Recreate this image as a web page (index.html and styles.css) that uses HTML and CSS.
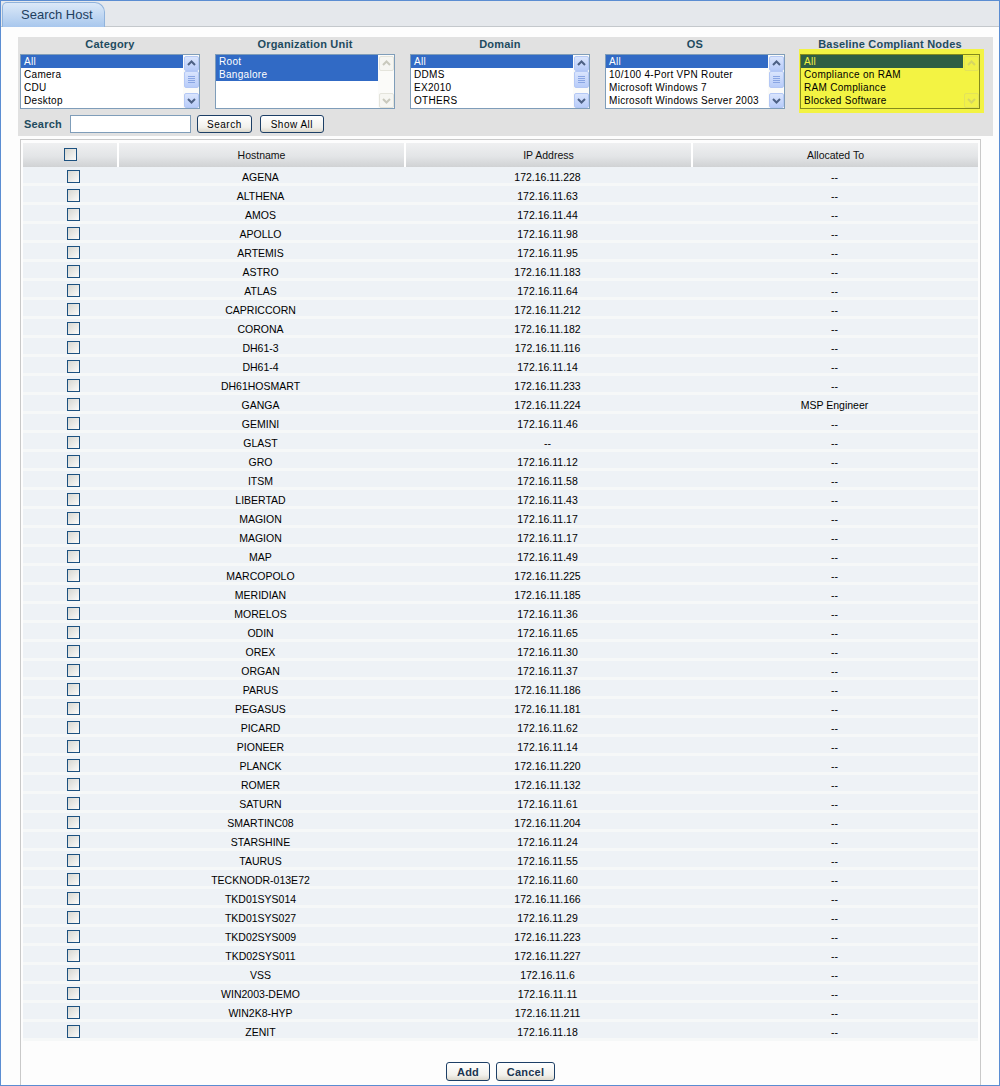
FILE: index.html
```html
<!DOCTYPE html>
<html lang="en">
<head>
    <meta charset="UTF-8">
    <title>Search Host</title>
    <link rel="stylesheet" href="styles.css">
</head>
<body>
<div class="window">
    <div class="tabbar">
        <div class="tab">Search Host</div>
    </div>
    <div class="content">
        <div class="filters">
            <div class="filter-row">
                <div class="filter">
                    <div class="filter-label">Category</div>
                    <div class="listbox">
                        <ul class="options">
                            <li class="sel">All</li>
                            <li>Camera</li>
                            <li>CDU</li>
                            <li>Desktop</li>
                        </ul>
                        <div class="scroll">
                            <span class="sb-btn"><svg width="13" height="13"><polyline points="3,8 6.5,4.5 10,8"/></svg></span>
                            <span class="sb-thumb"><i></i><i></i><i></i><i></i></span>
                            <span class="sb-btn last"><svg width="13" height="13"><polyline points="3,5 6.5,8.5 10,5"/></svg></span>
                        </div>
                    </div>
                </div>
                <div class="filter">
                    <div class="filter-label">Organization Unit</div>
                    <div class="listbox">
                        <ul class="options">
                            <li class="sel">Root</li>
                            <li class="sel">Bangalore</li>
                        </ul>
                        <div class="scroll off">
                            <span class="sb-btn"><svg width="13" height="13"><polyline points="3,8 6.5,4.5 10,8"/></svg></span>
                            <span class="sb-btn last"><svg width="13" height="13"><polyline points="3,5 6.5,8.5 10,5"/></svg></span>
                        </div>
                    </div>
                </div>
                <div class="filter">
                    <div class="filter-label">Domain</div>
                    <div class="listbox">
                        <ul class="options">
                            <li class="sel">All</li>
                            <li>DDMS</li>
                            <li>EX2010</li>
                            <li>OTHERS</li>
                        </ul>
                        <div class="scroll">
                            <span class="sb-btn"><svg width="13" height="13"><polyline points="3,8 6.5,4.5 10,8"/></svg></span>
                            <span class="sb-thumb"><i></i><i></i><i></i><i></i></span>
                            <span class="sb-btn last"><svg width="13" height="13"><polyline points="3,5 6.5,8.5 10,5"/></svg></span>
                        </div>
                    </div>
                </div>
                <div class="filter">
                    <div class="filter-label">OS</div>
                    <div class="listbox">
                        <ul class="options">
                            <li class="sel">All</li>
                            <li>10/100 4-Port VPN Router</li>
                            <li>Microsoft Windows 7</li>
                            <li>Microsoft Windows Server 2003</li>
                        </ul>
                        <div class="scroll">
                            <span class="sb-btn"><svg width="13" height="13"><polyline points="3,8 6.5,4.5 10,8"/></svg></span>
                            <span class="sb-thumb"><i></i><i></i><i></i><i></i></span>
                            <span class="sb-btn last"><svg width="13" height="13"><polyline points="3,5 6.5,8.5 10,5"/></svg></span>
                        </div>
                    </div>
                </div>
                <div class="filter">
                    <div class="filter-label">Baseline Compliant Nodes</div>
                    <div class="highlight">
                        <div class="listbox yellow">
                            <ul class="options">
                                <li class="sel">All</li>
                                <li>Compliance on RAM</li>
                                <li>RAM Compliance</li>
                                <li>Blocked Software</li>
                            </ul>
                            <div class="scroll off">
                                <span class="sb-btn"><svg width="13" height="13"><polyline points="3,8 6.5,4.5 10,8"/></svg></span>
                                <span class="sb-btn last"><svg width="13" height="13"><polyline points="3,5 6.5,8.5 10,5"/></svg></span>
                            </div>
                        </div>
                    </div>
                </div>
            </div>
            <div class="search-row">
                <span class="search-label">Search</span>
                <input type="text" class="search-input">
                <button class="btn btn-search">Search</button>
                <button class="btn btn-showall">Show All</button>
            </div>
        </div>

        <div class="grid-panel">
            <table class="grid">
                <thead>
                    <tr>
                        <th class="col-check"><span class="check"></span></th>
                        <th class="col-host">Hostname</th>
                        <th class="col-ip">IP Address</th>
                        <th>Allocated To</th>
                    </tr>
                </thead>
                <tbody id="hostRows"></tbody>
            </table>
            <div class="actions">
                <button class="btn big btn-add">Add</button>
                <button class="btn big btn-cancel">Cancel</button>
            </div>
        </div>
    </div>
</div>

<script>
    // hostname, last octet ('' = no ip), allocated to
    const hosts = [
        ['AGENA', '228'], ['ALTHENA', '63'], ['AMOS', '44'], ['APOLLO', '98'],
        ['ARTEMIS', '95'], ['ASTRO', '183'], ['ATLAS', '64'], ['CAPRICCORN', '212'],
        ['CORONA', '182'], ['DH61-3', '116'], ['DH61-4', '14'], ['DH61HOSMART', '233'],
        ['GANGA', '224', 'MSP Engineer'], ['GEMINI', '46'], ['GLAST', ''], ['GRO', '12'],
        ['ITSM', '58'], ['LIBERTAD', '43'], ['MAGION', '17'], ['MAGION', '17'],
        ['MAP', '49'], ['MARCOPOLO', '225'], ['MERIDIAN', '185'], ['MORELOS', '36'],
        ['ODIN', '65'], ['OREX', '30'], ['ORGAN', '37'], ['PARUS', '186'],
        ['PEGASUS', '181'], ['PICARD', '62'], ['PIONEER', '14'], ['PLANCK', '220'],
        ['ROMER', '132'], ['SATURN', '61'], ['SMARTINC08', '204'], ['STARSHINE', '24'],
        ['TAURUS', '55'], ['TECKNODR-013E72', '60'], ['TKD01SYS014', '166'], ['TKD01SYS027', '29'],
        ['TKD02SYS009', '223'], ['TKD02SYS011', '227'], ['VSS', '6'], ['WIN2003-DEMO', '11'],
        ['WIN2K8-HYP', '211'], ['ZENIT', '18']
    ];

    const tbody = document.getElementById('hostRows');
    hosts.forEach(([name, octet, owner]) => {
        const tr = document.createElement('tr');
        const ip = octet ? '172.16.11.' + octet : '--';
        tr.innerHTML = `
            <td class="cell-check"><span class="check"></span></td>
            <td>${name}</td>
            <td>${ip}</td>
            <td>${owner || '--'}</td>
        `;
        tbody.appendChild(tr);
    });
</script>
</body>
</html>
```

FILE: styles.css
```css
html, body {
    margin: 0;
    padding: 0;
}

body {
    font-family: "Liberation Sans", Arial, sans-serif;
    font-size: 11px;
    color: #000;
    background: #fff;
}

.window {
    width: 1000px;
    height: 1086px;
    box-sizing: border-box;
    border: 1px solid #5b8dd2;
    background: #fdfdfd;
    display: flex;
    flex-direction: column;
}

/* tab strip */
.tabbar {
    height: 25px;
    background: #e5e8ec;
    border-bottom: 1px solid #c4c8cc;
    display: flex;
}

.tab {
    margin: 1px 0 -1px 1px;
    width: 103px;
    height: 25px;
    box-sizing: border-box;
    border: 1px solid #90b3dc;
    border-bottom: none;
    border-radius: 5px 10px 0 0;
    background: linear-gradient(#dce9f8, #a8c7ed);
    padding-left: 18px;
    line-height: 24px;
    font-size: 13px;
    color: #1e3f5f;
}

.content {
    flex: 1;
    display: flex;
    flex-direction: column;
    padding: 10px 0 0 17px;
}

/* filter panel */
.filters {
    width: 975px;
    height: 99px;
    box-sizing: border-box;
    background: #e1e1e1;
    padding: 0 2px;
}

.filter-row {
    display: flex;
    gap: 15px;
}

.filter {
    width: 180px;
}

.filter-label {
    text-align: center;
    font-weight: bold;
    line-height: 14px;
    height: 14px;
    margin-bottom: 3px;
    color: #1e4b5f;
    letter-spacing: 0.2px;
}

.listbox {
    display: flex;
    height: 55px;
    box-sizing: border-box;
    border: 1px solid #7f9db9;
    background: #fff;
}

.options {
    flex: 1;
    list-style: none;
    margin: 0;
    padding: 0;
    font-size: 10px;
    letter-spacing: 0.3px;
}

.options li {
    height: 13px;
    line-height: 13px;
    padding-left: 3px;
    white-space: nowrap;
    overflow: hidden;
}

.options li.sel {
    background: #316ac5;
    color: #fff;
}

.scroll {
    width: 16px;
    box-sizing: border-box;
    padding: 1px 0 0 1px;
    display: flex;
    flex-direction: column;
    background: #fbfbf9;
}

.sb-btn,
.sb-thumb {
    display: flex;
    align-items: center;
    justify-content: center;
    width: 15px;
    height: 15px;
    box-sizing: border-box;
    border: 1px solid #b4c8f5;
    border-radius: 2px;
    background: linear-gradient(#dae5fd, #b8ccf9);
}

.sb-btn svg polyline {
    fill: none;
    stroke: #4d6185;
    stroke-width: 2;
}

.sb-btn.last {
    margin-top: auto;
}

.sb-thumb {
    height: 17px;
    flex-direction: column;
    gap: 1px;
}

.sb-thumb i {
    display: block;
    width: 7px;
    height: 1px;
    background: #8aa6e4;
}

.scroll.off .sb-btn {
    border-color: #e4e4dc;
    background: #f6f6f2;
}

.scroll.off .sb-btn svg polyline {
    stroke: #c9c9bd;
}

/* baseline highlight */
.highlight {
    background: #f3f343;
    margin: -5px -4px -4px -1px;
    padding: 5px 4px 4px 1px;
}

.listbox.yellow {
    border-color: #848a1c;
    background: #f3f343;
}

.listbox.yellow .options li.sel {
    background: #2f5e44;
    color: #f3f343;
}

.listbox.yellow .scroll {
    background: #f3f343;
}

.listbox.yellow .sb-btn {
    border-color: #e3e35a;
    background: #f1f148;
}

.listbox.yellow .sb-btn svg polyline {
    stroke: #d6d662;
}

/* search row */
.search-row {
    display: flex;
    align-items: center;
    height: 18px;
    margin-top: 6px;
}

.search-label {
    font-weight: bold;
    color: #1e4b5f;
    margin: 0 8px 0 4px;
    letter-spacing: 0.2px;
}

.search-input {
    width: 121px;
    height: 18px;
    box-sizing: border-box;
    border: 1px solid #7f9db9;
    margin: 0 6px 0 0;
    padding: 0;
}

.btn {
    height: 18px;
    box-sizing: border-box;
    border: 1px solid #1d3f66;
    border-radius: 3px;
    background: linear-gradient(#ffffff, #f2f1ec 70%, #dcd8cc);
    font-family: "Liberation Sans", Arial, sans-serif;
    font-size: 10px;
    letter-spacing: 0.5px;
    color: #000;
    padding: 0;
    margin: 0;
}

.btn-search {
    width: 55px;
}

.btn-showall {
    width: 64px;
    margin-left: 8px;
}

/* host grid */
.grid-panel {
    flex: 1;
    width: 961px;
    margin: 3px 0 0 2px;
    box-sizing: border-box;
    border: 1px solid #c9c9c9;
    border-bottom: none;
    background: #fdfdfd;
    padding: 3px 2px 0 2px;
}

.grid {
    width: 955px;
    border-collapse: separate;
    border-spacing: 0;
    table-layout: fixed;
    font-size: 10.5px;
}

.grid th {
    height: 24px;
    padding: 0 0 1px;
    box-sizing: border-box;
    font-weight: normal;
    color: #111;
    background: linear-gradient(#eff0f1, #e3e5e7 55%, #d0d2d4);
    border-left: 2px solid #fff;
}

.grid th.col-check {
    width: 94px;
    border-left: none;
}

.grid th.col-host,
.grid th.col-ip {
    width: 287px;
}

.grid td {
    height: 16px;
    padding: 4px 0 0;
    box-sizing: border-box;
    line-height: 12px;
    text-align: center;
    background: #eef2f6;
    border-bottom: 3px solid #f6f8f8;
    white-space: nowrap;
}

.grid td.cell-check {
    padding: 0 0 0 6px;
}

.check {
    display: inline-block;
    width: 13px;
    height: 13px;
    box-sizing: border-box;
    border: 1px solid #1c5180;
    background: linear-gradient(135deg, #d6d6d0, #fbfbfa);
    vertical-align: top;
}

.grid th .check {
    vertical-align: middle;
}

.grid td .check {
    margin-top: 3px;
}

.actions {
    display: flex;
    justify-content: center;
    align-items: flex-start;
    gap: 6px;
    margin-top: 21px;
}

.btn.big {
    height: 19px;
    font-size: 11px;
    font-weight: bold;
    letter-spacing: 0.2px;
    color: #1b3551;
}

.btn-add {
    width: 44px;
}

.btn-cancel {
    width: 59px;
}
```
